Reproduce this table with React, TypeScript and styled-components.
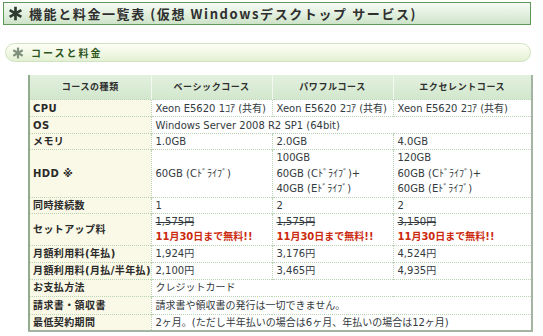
import React, { FC } from 'react'
import styled, { createGlobalStyle } from 'styled-components';

const palette = {
  green: '#5f975a',
  cream: '#faf8e6',
  text: '#333333',
  red: '#cc2a10',
  dots: '#b9d3b4',
};

const GlobalStyle = createGlobalStyle`
  html, body {
    margin: 0;
    padding: 0;
    background: #ffffff;
  }
  body {
    font-family: "DejaVu Sans", "Noto Sans CJK JP", sans-serif;
    color: ${palette.text};
  }
`

const Page = styled.div`
  width: 543px;
  height: 336px;
  overflow: hidden;
  padding: 2px 12px 0 3px;
  box-sizing: border-box;
`
const TitleBar = styled.h1`
  margin: 0;
  height: 23px;
  box-sizing: border-box;
  border: 1px solid ${palette.green};
  background: linear-gradient(to bottom, #f6fbf5 0%, #e3f0e0 50%, #cde3c8 100%);
  display: flex;
  align-items: center;
  gap: 6px;
  padding-left: 4px;
  font-family: "Noto Sans CJK JP", sans-serif;
  font-size: 13px;
  font-weight: bold;
  letter-spacing: 1.6px;
  color: #2f2f2f;
  white-space: nowrap;
`
const SubBar = styled.h2`
  margin: 18px 0 0 2px;
  height: 19px;
  box-sizing: border-box;
  border: 1px solid #cfe3c3;
  border-radius: 10px;
  background: linear-gradient(to bottom, #fdfef6 0%, #eff7e2 60%, #e3efd2 100%);
  display: flex;
  align-items: center;
  gap: 7px;
  padding-left: 6px;
  font-family: "Noto Sans CJK JP", sans-serif;
  font-size: 10px;
  font-weight: bold;
  letter-spacing: 2px;
  color: #2d5520;
`
const Star: FC<{ color: string; size: number }> = ({ color, size }) => (
  <svg width={size} height={size} viewBox="0 0 20 20">
    <g stroke={color} strokeWidth="3.6" strokeLinecap="butt">
      <line x1="10" y1="1" x2="10" y2="19" />
      <line x1="2.2" y1="5.5" x2="17.8" y2="14.5" />
      <line x1="2.2" y1="14.5" x2="17.8" y2="5.5" />
    </g>
  </svg>
)

const Table = styled.table`
  margin: 13px 0 0 25px;
  width: 505px;
  border-collapse: collapse;
  table-layout: fixed;
  font-size: 10px;
  line-height: 15px;
  border-left: 2px solid #92ad8e;
  border-right: 2px solid #a4b4a2;
  border-bottom: 2px solid #a4b4a2;
`
const Head = styled.th<{ $first?: boolean }>`
  height: 24px;
  padding: 0;
  background: linear-gradient(to bottom, #e2f0de, #d2e7cd);
  border-left: ${p => (p.$first ? 'none' : '1px solid #f2f8f0')};
  font-size: 9px;
  font-weight: bold;
  color: #2f2f2f;
  letter-spacing: 0.6px;
  text-align: center;
`
const Label = styled.th`
  text-align: left;
  font-weight: bold;
  background: ${palette.cream};
  padding: 0 3px;
  font-size: 10px;
  letter-spacing: 0.4px;
  color: #2a2a2a;
  white-space: nowrap;
  border-top: 1px dotted ${palette.dots};
`
const Cell = styled.td<{ $tall?: boolean }>`
  padding: 0 4px;
  vertical-align: ${p => (p.$tall ? 'top' : 'middle')};
  line-height: ${p => (p.$tall ? '15.5px' : '15px')};
  border-top: 1px dotted ${palette.dots};
  border-left: 1px dotted ${palette.dots};
  color: #333a40;
  white-space: nowrap;
`
const Old = styled.div`
  text-decoration: line-through;
  line-height: 15px;
`
const Free = styled.div`
  color: ${palette.red};
  font-weight: bold;
  line-height: 15px;
`

interface Row {
  label: string;
  values: React.ReactNode[];
  span?: boolean;
  h: number;
  tall?: boolean;
}

const setup = (price: string) => (
  <>
    <Old>{price}</Old>
    <Free>11月30日まで無料!!</Free>
  </>
)

const rows: Row[] = [
  { label: 'CPU', h: 17, values: ['Xeon E5620 1ｺｱ (共有)', 'Xeon E5620 2ｺｱ (共有)', 'Xeon E5620 2ｺｱ (共有)'] },
  { label: 'OS', h: 17, values: ['Windows Server 2008 R2 SP1 (64bit)'], span: true },
  { label: 'メモリ', h: 16, values: ['1.0GB', '2.0GB', '4.0GB'] },
  {
    label: 'HDD ※',
    h: 47,
    tall: true,
    values: [
      '60GB (Cﾄﾞﾗｲﾌﾞ)',
      <>100GB<br />60GB (Cﾄﾞﾗｲﾌﾞ)+<br />40GB (Eﾄﾞﾗｲﾌﾞ)</>,
      <>120GB<br />60GB (Cﾄﾞﾗｲﾌﾞ)+<br />60GB (Eﾄﾞﾗｲﾌﾞ)</>,
    ],
  },
  { label: '同時接続数', h: 16, values: ['1', '2', '2'] },
  { label: 'セットアップ料', h: 32, values: [setup('1,575円'), setup('1,575円'), setup('3,150円')] },
  { label: '月額利用料(年払)', h: 17, values: ['1,924円', '3,176円', '4,524円'] },
  { label: '月額利用料(月払/半年払)', h: 17, values: ['2,100円', '3,465円', '4,935円'] },
  { label: 'お支払方法', h: 17, values: ['クレジットカード'], span: true },
  { label: '請求書・領収書', h: 18, values: ['請求書や領収書の発行は一切できません。'], span: true },
  { label: '最低契約期間', h: 17, values: ['2ヶ月。(ただし半年払いの場合は6ヶ月、年払いの場合は12ヶ月)'], span: true },
]

const App: FC = () => {
  return (
    <Page>
      <GlobalStyle />
      <TitleBar>
        <Star color="#2e3a2e" size={15} />
        機能と料金一覧表 (仮想 Windowsデスクトップ サービス)
      </TitleBar>
      <SubBar>
        <Star color="#7f917d" size={12} />
        コースと料金
      </SubBar>
      <Table>
        <colgroup>
          <col style={{ width: 122 }} />
          <col style={{ width: 121 }} />
          <col style={{ width: 121 }} />
          <col />
        </colgroup>
        <thead>
          <tr>
            <Head $first>コースの種類</Head>
            <Head>ベーシックコース</Head>
            <Head>パワフルコース</Head>
            <Head>エクセレントコース</Head>
          </tr>
        </thead>
        <tbody>
          {rows.map(r => (
            <tr key={r.label} style={{ height: r.h }}>
              <Label>{r.label}</Label>
              {r.span ? (
                <Cell colSpan={3}>{r.values[0]}</Cell>
              ) : (
                r.values.map((v, i) => (
                  <Cell key={i} $tall={r.tall && i > 0}>{v}</Cell>
                ))
              )}
            </tr>
          ))}
        </tbody>
      </Table>
    </Page>
  )
}

export default App
